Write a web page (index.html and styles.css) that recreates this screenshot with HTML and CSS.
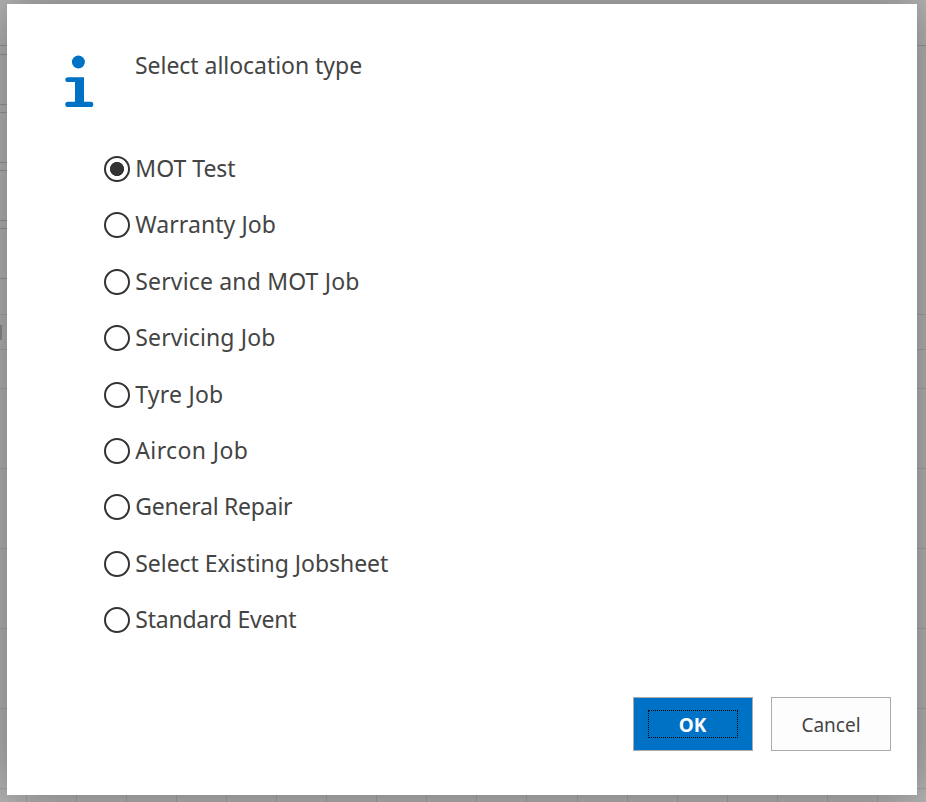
FILE: index.html
```html
<!DOCTYPE html>
<html lang="en">
<head>
<meta charset="utf-8">
<title>Select allocation type</title>
<link rel="stylesheet" href="styles.css">
</head>
<body>
<svg class="backdrop" width="926" height="802" viewBox="0 0 926 802" aria-hidden="true">
  <path class="line strong" d="M0 45.5H926M0 54.5H20M0 104.5H20M0 112.5H20M0 162.5H20M0 170.5H20M0 220.5H20M0 228.5H20M0 278.5H20"/>
  <path class="line" d="M0 314.5H926M0 349.5H926M0 388.5H926M0 468.5H926M0 548.5H926M0 628.5H926M0 708.5H926M0 788.5H926"/>
  <path class="line" d="M26.5 788V802M76.5 788V802M126.5 788V802M176.5 788V802M226.5 788V802M276.5 788V802M326.5 788V802M376.5 788V802M426.5 788V802M476.5 788V802M526.5 788V802M577.5 788V802M627.5 788V802M677.5 788V802M727.5 788V802M777.5 788V802M827.5 788V802M877.5 788V802"/>
  <rect class="marker" x="0" y="325" width="2" height="15"/>
</svg>
<main class="dialog" role="dialog" aria-labelledby="title">
  <header class="header">
    <svg class="info" width="29" height="52" viewBox="0 0 29 52" aria-hidden="true">
      <circle cx="13.4" cy="7" r="6.5"/>
      <path d="M3 22.3H19V46.8H26C29.1 46.8 29.1 52 26 52H3C-.7 52-.7 46.8 3 46.8H10V27H3C-.7 27-.7 22.3 3 22.3Z"/>
    </svg>
    <h1 class="title" id="title">Select allocation type</h1>
  </header>
  <div class="options" role="radiogroup">
    <label class="option"><input class="radio" type="radio" name="type" checked><span class="name">MOT Test</span></label>
    <label class="option"><input class="radio" type="radio" name="type"><span class="name warranty">Warranty Job</span></label>
    <label class="option"><input class="radio" type="radio" name="type"><span class="name service-mot">Service and MOT Job</span></label>
    <label class="option"><input class="radio" type="radio" name="type"><span class="name servicing">Servicing Job</span></label>
    <label class="option"><input class="radio" type="radio" name="type"><span class="name tyre">Tyre Job</span></label>
    <label class="option"><input class="radio" type="radio" name="type"><span class="name aircon">Aircon Job</span></label>
    <label class="option"><input class="radio" type="radio" name="type"><span class="name general">General Repair</span></label>
    <label class="option"><input class="radio" type="radio" name="type"><span class="name existing">Select Existing Jobsheet</span></label>
    <label class="option"><input class="radio" type="radio" name="type"><span class="name standard">Standard Event</span></label>
  </div>
  <footer class="actions">
    <button class="button primary" type="button"><span class="focus">OK</span></button>
    <button class="button" type="button"><span class="caption">Cancel</span></button>
  </footer>
</main>
</body>
</html>
```
FILE: styles.css
```css
* { box-sizing: border-box; }
body {
  margin: 0;
  width: 926px;
  height: 802px;
  padding: 4px 9px 7px 7px;
  overflow: hidden;
  background: #b5b5b5;
  color: #444;
  font-family: "Noto Sans", "Open Sans", sans-serif;
}
.backdrop { position: absolute; left: 0; top: 0; }
.line { fill: none; stroke: #a3a3a3; }
.strong { stroke: #969696; }
.marker { fill: #8c8c93; }
.dialog {
  position: relative;
  display: flex;
  flex-direction: column;
  width: 910px;
  height: 791px;
  background: #fff;
  box-shadow: 0 0 50px rgba(0, 0, 0, .38);
}
.header { display: flex; height: 136.75px; padding: 51px 0 0 58px; }
.info { fill: #0072c6; }
.title {
  margin: -6px 0 0 41px;
  font-size: 23px;
  font-weight: 400;
  line-height: 32px;
  letter-spacing: -.04px;
  white-space: nowrap;
}
.options { padding-left: 97px; }
.option {
  display: flex;
  align-items: center;
  height: 56.4px;
  gap: 5.3px;
  font-size: 23px;
  white-space: nowrap;
}
.name { padding-bottom: 2px; }
.warranty { letter-spacing: .07px; }
.service-mot { letter-spacing: .16px; }
.servicing { letter-spacing: .14px; }
.tyre { letter-spacing: .22px; }
.aircon { letter-spacing: .38px; }
.general { letter-spacing: -.25px; }
.existing { letter-spacing: -.05px; }
.standard { letter-spacing: -.23px; }
.radio {
  appearance: none;
  width: 26px;
  height: 26px;
  margin: 0;
  border: 2px solid #333;
  border-radius: 50%;
  background: #fff;
}
.radio:checked { background: radial-gradient(circle, #333 0 6.7px, #fff 7.4px); }
.actions {
  display: flex;
  justify-content: flex-end;
  gap: 18px;
  margin: auto 26px 44px 0;
}
.button {
  display: flex;
  align-items: center;
  justify-content: center;
  width: 120px;
  height: 54px;
  padding: 0;
  border: 1px solid #ababab;
  background: #fdfdfd;
  color: #444;
  font: 400 19px/28px "Noto Sans", "Open Sans", sans-serif;
}
.primary { background: #0072c6; color: #fff; font-weight: 700; }
.focus {
  width: 90px;
  height: 28px;
  margin-right: 1px;
  border: 1px dotted #000;
}
.caption { padding-top: 2px; }
```
